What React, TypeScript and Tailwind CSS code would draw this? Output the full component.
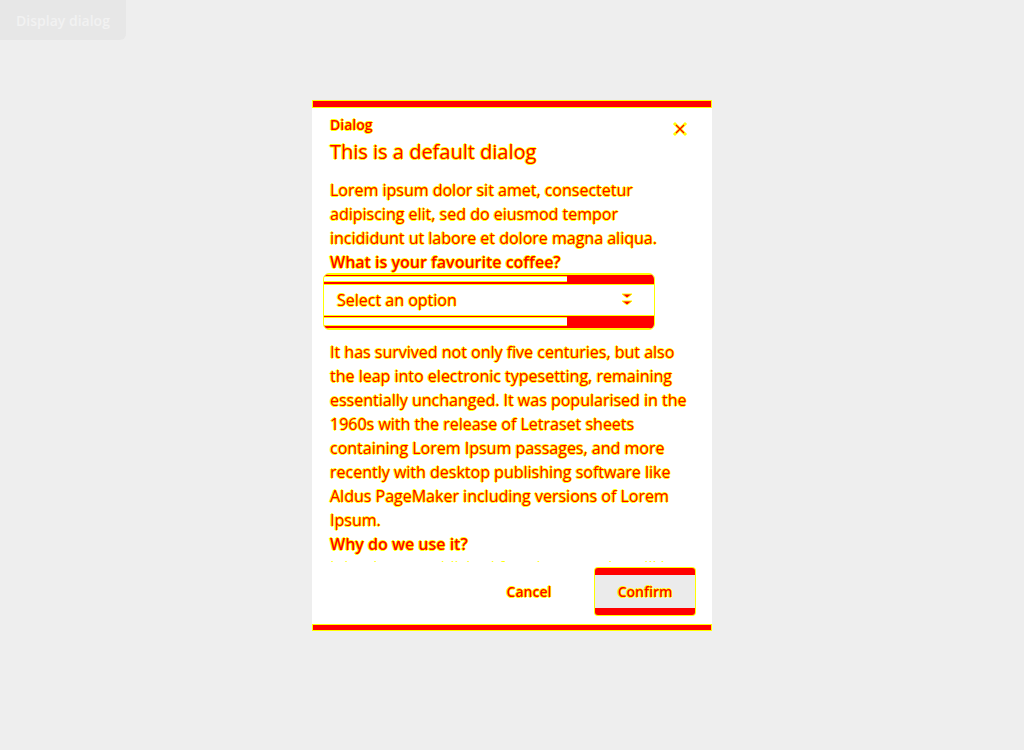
import React from "react";

const diff =
  "text-[#ff0000] [text-shadow:1px_0_0_#ffff00,-1px_0_0_#ffff00,0_1px_0_#ffff00,0_-1px_0_#ffff00]";

function CloseIcon() {
  return (
    <svg width="16" height="16" viewBox="0 0 16 16" fill="none">
      <path d="M3 3 L13 13 M13 3 L3 13" stroke="#ffff00" strokeWidth="3" strokeLinecap="square" />
      <path d="M4 4 L12 12 M12 4 L4 12" stroke="#ff0000" strokeWidth="1.2" />
    </svg>
  );
}

function Chevrons() {
  return (
    <svg width="14" height="16" viewBox="0 0 14 16" fill="none">
      <path d="M2 2 H12 L7 6 Z" fill="#ff0000" stroke="#ffff00" strokeWidth="1" />
      <path d="M2 9 H12 L7 13 Z" fill="#ff0000" stroke="#ffff00" strokeWidth="1" />
    </svg>
  );
}

function Band({ h }: { h: string }) {
  return (
    <div className={`flex ${h}`}>
      <div className="w-[243px] flex flex-col justify-between">
        <div className="h-[3px] bg-[#ff0000] border-y border-[#ffff00]" />
        <div className="h-[4px] bg-[#ff0000] border-y border-[#ffff00]" />
      </div>
      <div className="flex-1 bg-[#ff0000] border-y border-[#ffff00]" />
    </div>
  );
}

export default function App() {
  return (
    <div className="relative min-h-[750px] bg-[#eeeeee] font-['Open_Sans',sans-serif]">
      <button className="h-[40px] w-[126px] rounded-br-[6px] bg-[#e7e7e7] text-[14px] font-semibold text-[#f2f2f2]">
        Display dialog
      </button>

      <div className="fixed inset-0 flex justify-center pt-[100px]">
        <div className="flex h-[531px] w-[400px] flex-col bg-white">
          <div className="h-[8px] bg-[#ff0000] border border-[#ffff00]" />

          <div className="relative px-[18px] pt-[7px]">
            <div className={`text-[14px] leading-[20px] font-semibold ${diff}`}>Dialog</div>
            <div className={`mt-[3px] text-[20px] leading-[28px] ${diff}`}>This is a default dialog</div>
            <button className="absolute right-[24px] top-[13px]">
              <CloseIcon />
            </button>
          </div>

          <div className="mt-[12px] h-[384px] overflow-hidden px-[18px]">
            <p className={`text-[16px] leading-[24px] ${diff}`}>
              Lorem ipsum dolor sit amet, consectetur adipiscing elit, sed do eiusmod tempor incididunt ut labore et dolore magna aliqua.
            </p>
            <div className={`text-[16px] leading-[24px] font-semibold ${diff}`}>What is your favourite coffee?</div>
            <div className="relative -mt-[1px] ml-[-7px] flex h-[57px] w-[332px] flex-col overflow-hidden rounded-[6px] border border-[#ffff00]">
              <Band h="h-[11px]" />
              <div className="flex h-[30px] items-center justify-between pl-[13px] pr-[20px]">
                <span className={`text-[16px] leading-[24px] ${diff}`}>Select an option</span>
                <Chevrons />
              </div>
              <Band h="h-[14px]" />
            </div>
            <p className={`mt-[10px] text-[16px] leading-[24px] ${diff}`}>
              It has survived not only five centuries, but also the leap into electronic typesetting, remaining essentially unchanged. It was popularised in the 1960s with the release of Letraset sheets containing Lorem Ipsum passages, and more recently with desktop publishing software like Aldus PageMaker including versions of Lorem Ipsum.
            </p>
            <div className={`text-[16px] leading-[24px] font-semibold ${diff}`}>Why do we use it?</div>
            <p className={`h-[24px] overflow-hidden whitespace-nowrap text-[16px] leading-[24px] ${diff}`}>
              It is a long established fact that a reader will be
            </p>
          </div>

          <div className="mt-[6px] flex h-[47px] items-center justify-end gap-4 pr-[17px]">
            <button className={`w-[100px] text-center text-[14px] font-semibold ${diff}`}>Cancel</button>
            <button className="flex h-[47px] w-[100px] items-center justify-center rounded-[3px] border-y-[7px] border-[#ff0000] bg-[#ebebeb] shadow-[0_0_0_1px_#ffff00]">
              <span className={`text-[14px] font-semibold ${diff}`}>Confirm</span>
            </button>
          </div>

          <div className="mt-[9px] h-[7px] bg-[#ff0000] border border-[#ffff00]" />
        </div>
      </div>
    </div>
  );
}
